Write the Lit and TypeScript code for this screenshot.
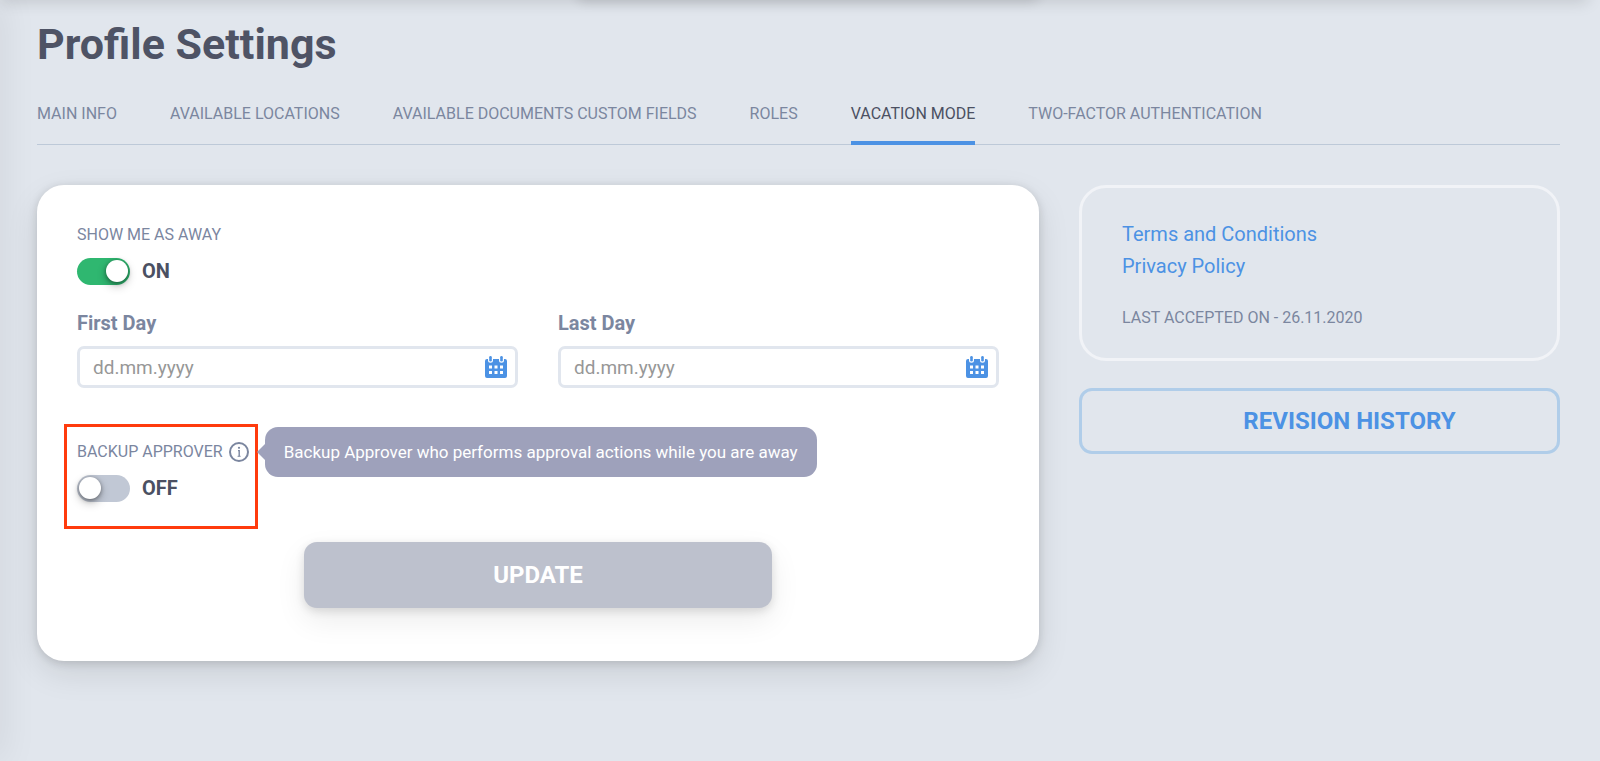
import { LitElement, html, css } from "lit";
import { customElement, property, state } from "lit/decorators.js";
import { classMap } from "lit/directives/class-map.js";

@customElement("toggle-switch")
class ToggleSwitch extends LitElement {
  static styles = css`
    :host {
      display: block;
    }
    .label-row {
      display: flex;
      align-items: center;
      height: 20px;
      gap: 6px;
      margin-bottom: 13px;
    }
    .caption {
      font-size: 16px;
      line-height: 20px;
      text-transform: uppercase;
      color: #7b869f;
    }
    .row {
      display: flex;
      align-items: flex-start;
      gap: 12px;
      height: 27px;
    }
    .switch {
      appearance: none;
      margin: 0;
      width: 53px;
      height: 27px;
      padding: 2px;
      box-sizing: border-box;
      border-radius: 14px;
      background: #c1c8d5;
      display: flex;
      cursor: pointer;
    }
    .switch::before {
      content: "";
      width: 22px;
      height: 22px;
      border-radius: 50%;
      background: #fff;
      box-shadow: 0 4px 10px rgba(0, 0, 0, 0.25), 0 1px 4px rgba(0, 0, 0, 0.4);
    }
    .switch:checked {
      background: #2fb770;
      justify-content: flex-end;
    }
    .value {
      font-size: 20px;
      line-height: 26px;
      font-weight: 700;
      color: #4b5062;
    }
  `;

  @property() caption = "";
  @property({ type: Boolean }) on = false;

  render() {
    return html`
      <div class="label-row">
        <label class="caption" for="switch">${this.caption}</label>
        <slot></slot>
      </div>
      <div class="row">
        <input
          id="switch"
          class="switch"
          type="checkbox"
          role="switch"
          .checked=${this.on}
          @change=${(e: Event) => (this.on = (e.target as HTMLInputElement).checked)}
        />
        <span class="value">${this.on ? "ON" : "OFF"}</span>
      </div>
    `;
  }
}

@customElement("date-field")
class DateField extends LitElement {
  static styles = css`
    :host {
      display: block;
      min-width: 0;
    }
    .label {
      display: block;
      font-size: 20px;
      line-height: 24px;
      font-weight: 700;
      color: #7b869f;
      margin-bottom: 11px;
    }
    .box {
      display: flex;
      align-items: center;
      height: 42px;
      box-sizing: border-box;
      border: 3px solid #e1e6ee;
      border-radius: 7px;
      background: #fff;
      padding: 0 8px 0 13px;
    }
    .input {
      flex: 1;
      min-width: 0;
      border: 0;
      outline: 0;
      padding: 2px 0 0;
      background: none;
      font: 400 19px/24px Roboto, sans-serif;
      color: #4b5062;
    }
    .input::placeholder {
      color: #979797;
      opacity: 1;
    }
    .picker {
      display: block;
      border: 0;
      padding: 0;
      background: none;
      cursor: pointer;
    }
    .icon {
      display: block;
    }
  `;

  @property() label = "";

  render() {
    return html`
      <label class="label" for="date">${this.label}</label>
      <div class="box">
        <input id="date" class="input" type="text" placeholder="dd.mm.yyyy" />
        <button class="picker" type="button" aria-label="Open calendar">
          <svg class="icon" width="22" height="22" viewBox="0 0 22 22">
            <path
              fill="#4c92e4"
              d="M2 3H3V4.2a2.5 2.5 0 0 0 5 0V3h6V4.2a2.5 2.5 0 0 0 5 0V3h1a2 2 0 0 1 2 2V20a2 2 0 0 1-2 2H2a2 2 0 0 1-2-2V5a2 2 0 0 1 2-2Z"
            />
            <rect x="4.2" y="0" width="2.6" height="5.6" rx="1.3" fill="#4c92e4" />
            <rect x="15.2" y="0" width="2.6" height="5.6" rx="1.3" fill="#4c92e4" />
            <path
              fill="#fff"
              d="M4 9.500h3v3H4zM9.500 9.500h3v3h-3zM15 9.500h3v3h-3zM4 15h3v3H4zM9.500 15h3v3h-3zM15 15h3v3h-3z"
            />
          </svg>
        </button>
      </div>
    `;
  }
}

@customElement("app-root")
class AppRoot extends LitElement {
  static styles = css`
    :host {
      display: block;
      position: relative;
      box-sizing: border-box;
      min-height: 100vh;
      overflow: hidden;
      padding: 20px 40px 40px 37px;
      background: #e1e6ed;
      font-family: Roboto, sans-serif;
    }
    .edge {
      position: absolute;
      pointer-events: none;
    }
    .edge-top {
      left: 0;
      right: 12px;
      bottom: 100%;
      height: 20px;
      box-shadow: 0 2px 16px rgba(0, 0, 0, 0.14);
    }
    .edge-menu {
      left: 36%;
      width: 29%;
      bottom: 100%;
      height: 20px;
      border-radius: 20px;
      box-shadow: 0 2px 12px rgba(0, 0, 0, 0.12);
    }
    .edge-left {
      right: 100%;
      top: 0;
      bottom: 0;
      width: 20px;
      box-shadow: 0 0 36px rgba(0, 0, 0, 0.1);
    }
    .title {
      margin: 0 0 36px;
      font-size: 43px;
      line-height: 48px;
      font-weight: 700;
      color: #4e5365;
    }
    .tabs {
      display: flex;
      gap: 53px;
      box-shadow: inset 0 -1px #bdc9d8;
      margin-bottom: 40px;
    }
    .tab {
      font-size: 16px;
      line-height: 20px;
      padding-bottom: 17px;
      border-bottom: 4px solid transparent;
      color: #7b869f;
      text-decoration: none;
      text-transform: uppercase;
      white-space: nowrap;
    }
    .tab.active {
      color: #4b5062;
      border-bottom-color: #4c92e4;
    }
    .columns {
      display: grid;
      grid-template-columns: repeat(3, 1fr);
      gap: 40px;
      align-items: start;
    }
    .card {
      grid-column: span 2;
      background: #fff;
      border-radius: 27px;
      padding: 40px 40px 53px;
      box-shadow: 0 12px 32px rgba(0, 0, 0, 0.1), 0 2px 10px rgba(0, 0, 0, 0.14);
    }
    .dates {
      display: grid;
      grid-template-columns: 1fr 1fr;
      gap: 40px;
      margin: 26px 0 54px;
    }
    .backup {
      position: relative;
      width: max-content;
    }
    .highlight {
      position: absolute;
      inset: -18px -9px -27px -13px;
      border: 3px solid #ff3b0d;
      pointer-events: none;
    }
    .info {
      display: block;
    }
    .tooltip {
      position: absolute;
      left: 100%;
      top: -15px;
      margin-left: 16px;
      padding: 13px 19px;
      border-radius: 13px;
      background: #9ea1bb;
      color: #fff;
      font-size: 17px;
      line-height: 24px;
      white-space: nowrap;
    }
    .tooltip::before {
      content: "";
      position: absolute;
      right: 100%;
      top: 50%;
      margin-top: -8px;
      border: 8px solid transparent;
      border-left-width: 0;
      border-right-color: #9ea1bb;
    }
    .update {
      display: block;
      width: 468px;
      max-width: 100%;
      height: 66px;
      margin: 40px auto 0;
      border: 0;
      border-radius: 13px;
      background: #bdc1cd;
      color: #fff;
      font: 700 24px/28px Roboto, sans-serif;
      box-shadow: 0 12px 30px rgba(0, 0, 0, 0.08), 0 3px 10px rgba(0, 0, 0, 0.12);
    }
    .side {
      display: flex;
      flex-direction: column;
      gap: 27px;
    }
    .terms {
      display: flex;
      flex-direction: column;
      align-items: flex-start;
      padding: 30px 40px;
      border: 3px solid #f1f3f7;
      border-radius: 27px;
    }
    .link {
      font-size: 20px;
      line-height: 32px;
      color: #4c92e4;
      text-decoration: none;
    }
    .accepted {
      margin: 26px 0 0;
      font-size: 16px;
      line-height: 20px;
      color: #7b869f;
      text-transform: uppercase;
    }
    .history {
      height: 66px;
      padding: 0 0 0 60px;
      border: 3px solid #b0cde9;
      border-radius: 13px;
      background: none;
      color: #4c92e4;
      font: 700 24px/28px Roboto, sans-serif;
      cursor: pointer;
    }
  `;

  @state() private active = "Vacation mode";

  private tabs = [
    "Main info",
    "Available locations",
    "Available documents custom fields",
    "Roles",
    "Vacation mode",
    "Two-factor authentication",
  ];

  private select(e: Event, tab: string) {
    e.preventDefault();
    this.active = tab;
  }

  render() {
    return html`
      <div class="edge edge-top"></div>
      <div class="edge edge-menu"></div>
      <div class="edge edge-left"></div>
      <h1 class="title">Profile Settings</h1>
      <nav class="tabs">
        ${this.tabs.map(
          (tab) => html`<a
            href="#"
            class=${classMap({ tab: true, active: tab === this.active })}
            @click=${(e: Event) => this.select(e, tab)}
            >${tab}</a
          >`
        )}
      </nav>
      <div class="columns">
        <form class="card" @submit=${(e: Event) => e.preventDefault()}>
          <toggle-switch caption="Show me as away" on></toggle-switch>
          <div class="dates">
            <date-field label="First Day"></date-field>
            <date-field label="Last Day"></date-field>
          </div>
          <div class="backup">
            <toggle-switch caption="Backup approver">
              <svg class="info" width="20" height="20" viewBox="0 0 20 20">
                <circle cx="10" cy="10" r="9" fill="none" stroke="#7b869f" stroke-width="2" />
                <circle cx="10" cy="5.800" r="1.100" fill="#7b869f" />
                <path d="M9 8.600H10.200V14" fill="none" stroke="#7b869f" stroke-width="1.400" />
                <path d="M8.600 14.300H11.600" stroke="#7b869f" stroke-width="1" />
              </svg>
            </toggle-switch>
            <div class="highlight"></div>
            <div class="tooltip" role="tooltip">
              Backup Approver who performs approval actions while you are away
            </div>
          </div>
          <button class="update" type="submit">UPDATE</button>
        </form>
        <aside class="side">
          <section class="terms">
            <a class="link" href="#">Terms and Conditions</a>
            <a class="link" href="#">Privacy Policy</a>
            <p class="accepted">Last accepted on - 26.11.2020</p>
          </section>
          <button class="history" type="button">REVISION HISTORY</button>
        </aside>
      </div>
    `;
  }
}
